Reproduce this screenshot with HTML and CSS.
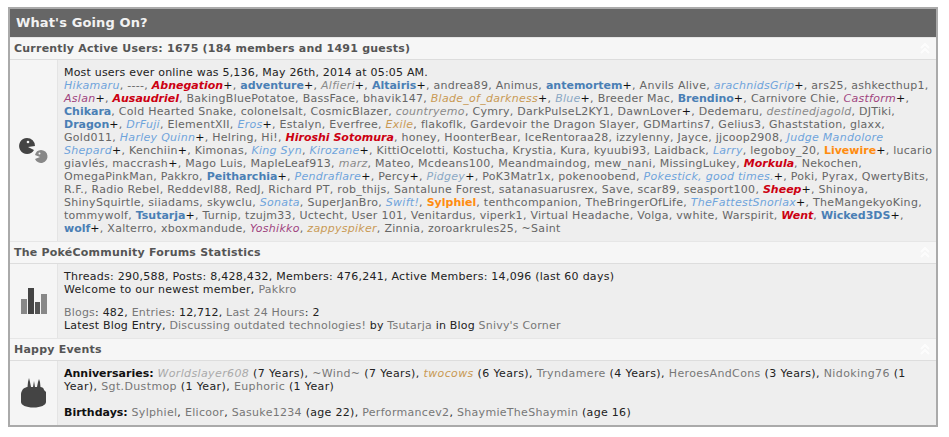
FILE: index.html
```html
<!DOCTYPE html>
<html lang="en">
<head>
<meta charset="utf-8">
<title>What's Going On?</title>
<link rel="stylesheet" href="styles.css">
</head>
<body>
<div class="box">
<h2 class="title">What's Going On?</h2>

<div class="sec"><span>Currently Active Users: 1675 (184 members and 1491 guests)</span>
<svg class="chev" width="10" height="11" viewBox="0 0 10 11"><path d="M1 5l4-4 4 4M1 10l4-4 4 4" fill="none" stroke="#fff" stroke-width="2"/></svg></div>
<div class="row">
<div class="ic"><svg width="31" height="28" viewBox="0 0 31 28">
<path d="M9 1a8 8 0 1 0 7 12l-6-3 7-1A8 8 0 0 0 9 1z" fill="#444"/><circle cx="10" cy="5" r="1.3" fill="#f5f5f5"/>
<path d="M23 13a6.500 6.500 0 1 1 -6 9l5-2-5-2a6.500 6.500 0 0 1 6-5z" fill="#888"/><circle cx="21.500" cy="16.500" r="1" fill="#f5f5f5"/>
</svg></div>
<div class="txt">
<div class="k s20">Most users ever online was 5,136, May 26th, 2014 at 05:05 AM.</div>
<div class="n"><a class="be">Hikamaru</a>, ----, <a class="r">Abnegation</a><b>+</b>, <a class="bb">adventure</a><b>+</b>, <a class="gi">Alfieri</a><b>+</b>, <a class="bb">Altairis</a><b>+</b>, andrea89, Animus, <a class="bb">antemortem</a><b>+</b>, Anvils Alive, <a class="be">arachnidsGrip</a><b>+</b>, ars25, ashkecthup1,<br>
<a class="p">Aslan</a><b>+</b>, <a class="r">Ausaudriel</a>, BakingBluePotatoe, BassFace, bhavik147, <a class="t">Blade_of_darkness</a><b>+</b>, <a class="gb">Blue</a><b>+</b>, Breeder Mac, <a class="bb">Brendino</a><b>+</b>, Carnivore Chie, <a class="p">Castform</a><b>+</b>,<br>
<a class="bb">Chikara</a>, Cold Hearted Snake, colonelsalt, CosmicBlazer, <a class="gi">countryemo</a>, Cymry, DarkPulseL2KY1, DawnLover<b>+</b>, Dedemaru, <a class="gi">destinedjagold</a>, DJTiki,<br>
<a class="bb">Dragon</a><b>+</b>, <a class="be">DrFuji</a>, ElementXII, <a class="be">Eros</a><b>+</b>, Estalyn, Everfree, <a class="t">Exile</a>, flakoflk, Gardevoir the Dragon Slayer, GDMartins7, Gelius3, Ghaststation, glaxx,<br>
Gold011, <a class="be">Harley Quinn</a><b>+</b>, Helring, Hi!, <a class="r">Hiroshi Sotomura</a>, honey, HoonterBear, IceRentoraa28, izzylenny, Jayce, jjcoop2908, <a class="be">Judge Mandolore</a><br>
<a class="be">Shepard</a><b>+</b>, Kenchiin<b>+</b>, Kimonas, <a class="be">King Syn</a>, <a class="be">Kirozane</a><b>+</b>, KittiOcelotti, Kostucha, Krystia, Kura, kyuubi93, Laidback, <a class="be">Larry</a>, legoboy_20, <a class="o">Livewire</a><b>+</b>, lucario<br>
giavlés, maccrash<b>+</b>, Mago Luis, MapleLeaf913, <a class="gi">marz</a>, Mateo, Mcdeans100, Meandmaindog, mew_nani, MissingLukey, <a class="r">Morkula</a>, Nekochen,<br>
OmegaPinkMan, Pakkro, <a class="bb">Peitharchia</a><b>+</b>, <a class="be">Pendraflare</a><b>+</b>, Percy<b>+</b>, <a class="gb">Pidgey</a><b>+</b>, PoK3Matr1x, pokenoobend, <a class="be">Pokestick, good times.</a><b>+</b>, Poki, Pyrax, QwertyBits,<br>
R.F., Radio Rebel, Reddevl88, RedJ, Richard PT, rob_thijs, Santalune Forest, satanasuarusrex, Save, scar89, seasport100, <a class="r">Sheep</a><b>+</b>, Shinoya,<br>
ShinySquirtle, siiadams, skywclu, <a class="be">Sonata</a>, SuperJanBro, <a class="be">Swift!</a>, <a class="o">Sylphiel</a>, tenthcompanion, TheBringerOfLife, <a class="be">TheFattestSnorlax</a><b>+</b>, TheMangekyoKing,<br>
tommywolf, <a class="bb">Tsutarja</a><b>+</b>, Turnip, tzujm33, Uctecht, User 101, Venitardus, viperk1, Virtual Headache, Volga, vwhite, Warspirit, <a class="r">Went</a>, <a class="bb">Wicked3DS</a><b>+</b>,<br>
<a class="bb">wolf</a><b>+</b>, Xalterro, xboxmandude, <a class="p">Yoshikko</a>, <a class="t">zappyspiker</a>, Zinnia, zoroarkrules25, ~Saint</div>
</div>
</div>

<div class="sec"><span>The PokéCommunity Forums Statistics</span>
<svg class="chev" width="10" height="11" viewBox="0 0 10 11"><path d="M1 5l4-4 4 4M1 10l4-4 4 4" fill="none" stroke="#fff" stroke-width="2"/></svg></div>
<div class="row">
<div class="ic"><svg width="26" height="26" viewBox="0 0 26 26">
<rect x="0" y="11" width="6" height="15" fill="#888"/><rect x="7" y="0" width="6" height="26" fill="#444"/><rect x="14" y="14" width="5" height="12" fill="#555"/><rect x="20" y="6" width="6" height="20" fill="#888"/>
</svg></div>
<div class="txt">
<div class="k s26">Threads: 290,588, Posts: 8,428,432, Members: 476,241, Active Members: 14,096 (last 60 days)<br>Welcome to our newest member, <a class="g">Pakkro</a></div>
<div class="k gap s20"><a class="g">Blogs</a>: 482, <a class="g">Entries</a>: 12,712, <a class="g">Last 24 Hours</a>: 2<br>Latest Blog Entry, <a class="g">Discussing outdated technologies!</a> by <a class="g">Tsutarja</a> in Blog <a class="g">Snivy's Corner</a></div>
</div>
</div>

<div class="sec"><span>Happy Events</span>
<svg class="chev" width="10" height="11" viewBox="0 0 10 11"><path d="M1 5l4-4 4 4M1 10l4-4 4 4" fill="none" stroke="#fff" stroke-width="2"/></svg></div>
<div class="row">
<div class="ic"><svg width="26" height="30" viewBox="0 0 26 30">
<path d="M2 11C4 9.500 6 9 6.500 9L7 4 8 0l1 4 1 5h2l1-6 1 6h2l1-5 1-3 1 3 .5 5C21 9 23 10 23 12l2 2v10c0 3-5 5.500-12.500 5.500S0 27 0 24v-8c0-2 1-3 2-5z" fill="#444"/>
</svg></div>
<div class="txt">
<div class="k s37"><strong>Anniversaries:</strong> <a class="gi2">Worldslayer608</a> (7 Years), <a class="g">~Wind~</a> (7 Years), <a class="t">twocows</a> (6 Years), <a class="g">Tryndamere</a> (4 Years), <a class="g">HeroesAndCons</a> (3 Years), <a class="g">Nidoking76</a> (1<br>Year), <a class="g">Sgt.Dustmop</a> (1 Year), <a class="g">Euphoric</a> (1 Year)</div>
<div class="k gap2 s30"><strong>Birthdays:</strong> <a class="g">Sylphiel</a>, <a class="g">Elicoor</a>, <a class="g">Sasuke1234</a> (age 22), <a class="g">Performancev2</a>, <a class="g">ShaymieTheShaymin</a> (age 16)</div>
</div>
</div>
</div>
</body>
</html>
```
FILE: styles.css
```css
* { box-sizing: border-box; }
body {
  margin: 7px 0 0 8px;
  background: #fff;
  font-family: "DejaVu Sans", Verdana, sans-serif;
  font-size: 11px;
  line-height: 13px;
  color: #222;
}
.box {
  width: 930px;
  border: 2px solid #aaa;
  background: #eee;
}
.title {
  margin: 0;
  height: 28px;
  padding: 0 6px;
  background: #666;
  color: #f2f2f2;
  font-size: 13px;
  line-height: 28px;
  font-weight: bold;
  letter-spacing: .12px;
}
.sec {
  display: flex;
  justify-content: space-between;
  align-items: center;
  height: 23px;
  padding: 0 6px 0 4px;
  background: #f6f6f6;
  border-top: 1px solid #e6e6e6;
  border-bottom: 1px solid #ddd;
  font-weight: bold;
  color: #555;
  font-size: 11px;
  letter-spacing: .22px;
}
.chev { opacity: .75; }
.row { display: flex; }
.ic {
  flex: 0 0 48px;
  display: flex;
  align-items: center;
  justify-content: center;
  background: #f5f5f5;
  border-right: 1px solid #e4e4e4;
}
.txt {
  flex: 1;
  padding: 6px;
  white-space: nowrap;
}
.n { color: #666; letter-spacing: .28px; }
.k { color: #222; }
.s20 { letter-spacing: .2px; }
.s26 { letter-spacing: .26px; }
.s30 { letter-spacing: .3px; }
.s37 { letter-spacing: .37px; }
.gap { margin-top: 10px; }
.gap2 { margin-top: 13px; }
.n b { font-weight: normal; color: #111; }
a { color: #666; }
.g { color: #777; }
.be { color: #6ea4dc; font-style: italic; }
.gb { color: #8aa8c4; font-style: italic; }
.bb { color: #4a7fb5; font-weight: bold; letter-spacing: 0; }
.r { color: #cc0011; font-weight: bold; font-style: italic; letter-spacing: 0; }
.o { color: #ff8c10; font-weight: bold; letter-spacing: 0; }
.t { color: #c99a55; font-style: italic; }
.p { color: #a0447f; font-style: italic; }
.gi { color: #8a8a8a; font-style: italic; }
.gi2 { color: #aaa; font-style: italic; }
strong { color: #111; letter-spacing: 0; }
```
